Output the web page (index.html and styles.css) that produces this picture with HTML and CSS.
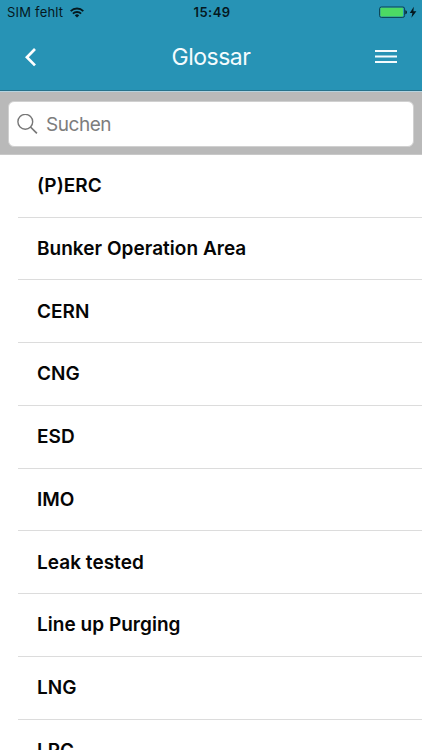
FILE: index.html
```html
<!DOCTYPE html>
<html lang="de">
  <head>
    <meta charset="UTF-8" />
    <meta name="viewport" content="width=device-width, initial-scale=1.0" />
    <title>Glossar</title>
    <link rel="stylesheet" href="styles.css">
  </head>
  <body>
    <header>
      <div class="status">
        <div class="netz">
          <span class="sim">SIM fehlt</span>
          <svg class="wlan" width="14" height="11" viewBox="0 0 14 11" fill="none" stroke="#05181e" stroke-width="1.9">
            <path d="M.7 4.1a9 9 0 0 1 12.6 0" />
            <path d="M2.9 6.6a5.9 5.9 0 0 1 8.2 0" />
            <path d="M7 10.5 4.8 8.4a3 3 0 0 1 4.4 0z" fill="#05181e" stroke="none" />
          </svg>
        </div>
        <span class="uhr">15:49</span>
        <div class="akku">
          <svg width="38" height="13" viewBox="0 0 38 13">
            <rect x=".6" y="1" width="25" height="10.4" rx="1.8" fill="#2793b5" stroke="#0d4150" />
            <rect x="1.4" y="1.8" width="22.6" height="8.8" rx=".8" fill="#4cd964" />
            <path d="M26.4 4.2c2 .2 2 3.8 0 4z" fill="#05181e" />
            <path d="M34.8.8 30.8 6.9h2.6l-1 4.9 5-6.6h-3z" fill="#05181e" />
          </svg>
        </div>
      </div>
      <nav>
        <button class="zurueck" aria-label="Zurück">
          <svg width="12" height="19" viewBox="0 0 12 19" fill="none" stroke="#fff" stroke-width="2.7">
            <path d="M10 1 1.9 9.2l8.1 8.2" />
          </svg>
        </button>
        <h1>Glossar</h1>
        <button class="menue" aria-label="Menü">
          <svg width="22" height="14" viewBox="0 0 22 14" stroke="#f4fbfd" stroke-width="2">
            <path d="M0 1h22M0 6.5h22M0 12h22" />
          </svg>
        </button>
      </nav>
    </header>

    <form class="suche">
      <label class="suchfeld">
        <svg width="21" height="21" viewBox="0 0 21 21" fill="none" stroke="#777" stroke-width="1.4">
          <circle cx="8.3" cy="7.8" r="7.4" />
          <path d="m13.5 13 6.4 6.4" stroke-width="1.7" />
        </svg>
        <input type="text" placeholder="Suchen" />
      </label>
    </form>

    <main>
      <ul class="liste">
        <li>(P)ERC</li>
        <li>Bunker Operation Area</li>
        <li>CERN</li>
        <li>CNG</li>
        <li>ESD</li>
        <li>IMO</li>
        <li>Leak tested</li>
        <li>Line up Purging</li>
        <li>LNG</li>
        <li>LPG</li>
      </ul>
    </main>
  </body>
</html>
```

FILE: styles.css
```css
* {
  box-sizing: border-box;
}

body {
  margin: 0;
  height: 750px;
  overflow: hidden;
  display: flex;
  flex-direction: column;
  background-color: white;
  font-family: Inter, "Liberation Sans", sans-serif;
}

header {
  flex: none;
  height: 91px;
  background-color: #2793b5;
  border-bottom: 1px solid #26728c;
}

.status {
  display: grid;
  grid-template-columns: 1fr auto 1fr;
  align-items: center;
  height: 24px;
  padding: 0 5px 0 7px;
  color: #05181e;
  font-size: 13px;
}

.netz {
  display: flex;
  align-items: center;
  gap: 7px;
}

.sim {
  letter-spacing: 0.2px;
}

.uhr {
  font-weight: 600;
  letter-spacing: 0.45px;
}

.akku {
  display: flex;
  justify-content: flex-end;
}

nav {
  display: flex;
  align-items: center;
  justify-content: space-between;
  height: 66px;
  padding: 0 25px;
}

button {
  display: flex;
  width: 22px;
  padding: 0;
  border: none;
  background: none;
}

h1 {
  margin: 0;
  color: #f4fbfd;
  font-size: 23px;
  font-weight: 400;
  letter-spacing: -0.5px;
}

.suche {
  flex: none;
  height: 63.75px;
  margin: 0;
  padding: 9px 8px 7px;
  background-color: #b9b9b9;
  border-top: 1px solid #b5d3df;
  border-bottom: 1px solid #c8c8c8;
}

.suchfeld {
  display: flex;
  align-items: center;
  gap: 8px;
  height: 46px;
  padding: 0 8px;
  background-color: white;
  border: 1px solid #d0d0d0;
  border-radius: 6px;
}

input {
  flex: 1;
  padding: 0;
  border: none;
  outline: none;
  font: 19px Inter, "Liberation Sans", sans-serif;
  letter-spacing: -0.45px;
}

input::placeholder {
  color: #7d7d7d;
}

.liste {
  margin: 0;
  padding: 0 0 0 18px;
  list-style: none;
}

.liste li {
  display: flex;
  align-items: center;
  height: 62.75px;
  padding-left: 19px;
  border-bottom: 1px solid #dcdcdc;
  color: #050505;
  font-size: 19px;
  font-weight: 600;
  letter-spacing: 0.03px;
}
```
